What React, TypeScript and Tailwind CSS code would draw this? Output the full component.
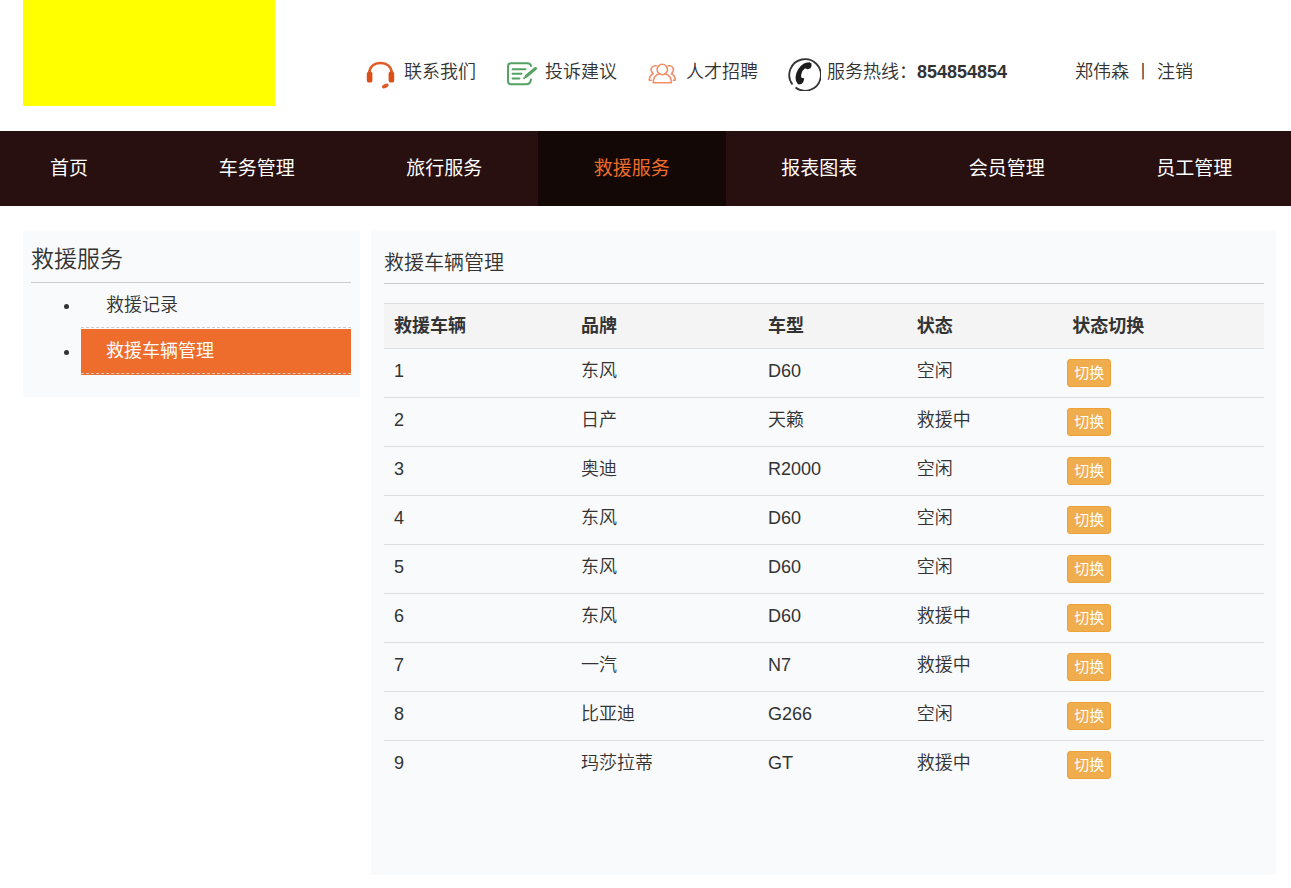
import { useState } from "react";
import type { ReactNode } from "react";

const HeadsetIcon = () => (
  <svg viewBox="0 0 32 32" className="h-8 w-8 shrink-0" aria-hidden="true">
    <path d="M5.300 15C5.300 8.800 10.200 5 16.500 5S27.700 8.800 27.700 15" fill="none" stroke="#e25a26" strokeWidth="2.500" />
    <rect x="2.800" y="13.500" width="5.600" height="11" rx="2.600" fill="#dd4f18" />
    <rect x="24.600" y="13.500" width="5.600" height="11" rx="2.600" fill="#dd4f18" />
    <ellipse cx="21.300" cy="28" rx="3.500" ry="1.900" transform="rotate(-24 21.300 28)" fill="#e05a25" />
  </svg>
);

const FeedbackIcon = () => (
  <svg viewBox="0 0 32 32" className="h-8 w-8 shrink-0" aria-hidden="true" fill="none" stroke="#55a364" strokeLinecap="round">
    <path d="M26 8q-.5-2.800-3.500-2.800H6Q3 5.200 3 8.500v14.500Q3 26.200 6 26.200h15.500q3.800 0 4.500-4.700" strokeWidth="2" />
    <path d="M7.500 11.200h13M7.500 15.800h9M7.500 20.500h7" strokeWidth="1.900" />
    <path d="M30.500 10.500L21.500 18" strokeWidth="3" />
    <path d="M21.500 18l-2.500 2.200" strokeWidth="1.800" />
  </svg>
);

const PeopleIcon = () => (
  <svg viewBox="0 0 32 32" className="h-8 w-8 shrink-0" aria-hidden="true" fill="none" stroke="#f08f68" strokeWidth="1.600" strokeLinejoin="round" strokeLinecap="round">
    <circle cx="16.300" cy="11.500" r="5.200" />
    <path d="M13 16c-3.800 1.200-5.800 4-5.800 8.800h18.200c0-4.800-2-7.600-5.800-8.800" />
    <path d="M10.200 7.800c-3.400-.5-5.600 2-4.900 5 .3 1.400 1 2.300 1.900 2.900-2.400 1-3.900 3.300-3.900 6.500h2" />
    <path d="M22.400 7.800c3.400-.5 5.600 2 4.900 5-.3 1.400-1 2.300-1.900 2.900 2.400 1 3.900 3.300 3.900 6.500h-2" />
  </svg>
);

const PhoneIcon = () => (
  <svg viewBox="0 0 34 34" className="h-[34px] w-[34px] shrink-0" aria-hidden="true">
    <path d="M5.500 27.500A15.800 15.800 0 1 1 8.500 30.500" fill="none" stroke="#333333" strokeWidth="1.800" />
    <path d="M16.500 6.800Q18.500 5.500 22.500 5.300L24.500 6.500Q25 9 23.500 11.200L20.500 12.300Q19 11.300 17.800 11.600Q15.500 13 14.300 17.200Q13.700 20 14.700 20.800L17.300 21.500Q17 24.800 14.500 27L11.500 27.500Q8.300 25 8.600 20Q9.500 11.500 16.500 6.800z" fill="#1c1c1c" />
  </svg>
);

const contactLinks: { label: string; icon: ReactNode }[] = [
  { label: "联系我们", icon: <HeadsetIcon /> },
  { label: "投诉建议", icon: <FeedbackIcon /> },
  { label: "人才招聘", icon: <PeopleIcon /> },
];

const navItems = ["首页", "车务管理", "旅行服务", "救援服务", "报表图表", "会员管理", "员工管理"];
const activeNav = "救援服务";

const sideItems = ["救援记录", "救援车辆管理"];
const activeSide = "救援车辆管理";

type Status = "空闲" | "救援中";
type Vehicle = { id: number; brand: string; model: string; status: Status };

const initialVehicles: Vehicle[] = [
  { id: 1, brand: "东风", model: "D60", status: "空闲" },
  { id: 2, brand: "日产", model: "天籁", status: "救援中" },
  { id: 3, brand: "奥迪", model: "R2000", status: "空闲" },
  { id: 4, brand: "东风", model: "D60", status: "空闲" },
  { id: 5, brand: "东风", model: "D60", status: "空闲" },
  { id: 6, brand: "东风", model: "D60", status: "救援中" },
  { id: 7, brand: "一汽", model: "N7", status: "救援中" },
  { id: 8, brand: "比亚迪", model: "G266", status: "空闲" },
  { id: 9, brand: "玛莎拉蒂", model: "GT", status: "救援中" },
];

function Header() {
  return (
    <header className="flex h-[131px] items-start pl-[23px]">
      <div className="h-[106px] w-[252px] shrink-0 bg-[#ffff00]" />
      <div className="ml-[89px] mt-[57px] flex h-[34px] items-center gap-[29px] whitespace-nowrap">
        {contactLinks.map((link) => (
          <a key={link.label} href="#" className="flex items-center gap-2">
            {link.icon}
            <span className="pb-1">{link.label}</span>
          </a>
        ))}
        <div className="flex items-center gap-[6px]">
          <PhoneIcon />
          <span className="pb-1">
            服务热线：<strong className="font-bold">854854854</strong>
          </span>
        </div>
      </div>
      <div className="ml-[68px] mt-[57px] flex h-[34px] items-center gap-[5px] whitespace-nowrap pb-1">
        <a href="#">郑伟森</a>
        <span>丨</span>
        <a href="#">注销</a>
      </div>
    </header>
  );
}

function MainNav() {
  return (
    <nav className="grid h-[75px] grid-cols-[163px_repeat(6,minmax(0,1fr))] bg-[#281010] pr-[3px] text-[19px] font-normal text-white">
      {navItems.map((item, i) => (
        <a
          key={item}
          href="#"
          className={`flex items-center justify-center ${i === 0 ? "pr-[25px]" : ""} ${
            item === activeNav ? "bg-[#130805] text-[#ee6c2c]" : ""
          }`}
        >
          {item}
        </a>
      ))}
    </nav>
  );
}

function Sidebar() {
  return (
    <aside className="w-[337px] shrink-0 bg-[#f9fafc] pb-[22px] pl-2 pr-[9px]">
      <h2 className="h-[52px] border-b border-[#cccccc] pt-3 text-[23px] leading-8">救援服务</h2>
      <ul className="list-disc pl-[50px]">
        {sideItems.map((item) => (
          <li key={item} className={item === activeSide ? "bg-[#ee6c2c] pb-px" : "pb-px"}>
            <a
              href="#"
              className={`block border-b border-dashed border-[#cccccc] pl-[25px] leading-[44px] ${
                item === activeSide ? "font-normal text-white" : ""
              }`}
            >
              {item}
            </a>
          </li>
        ))}
      </ul>
    </aside>
  );
}

function VehiclePanel() {
  const [vehicles, setVehicles] = useState(initialVehicles);

  const toggle = (id: number) =>
    setVehicles((list) =>
      list.map((v) => (v.id === id ? { ...v, status: v.status === "空闲" ? "救援中" : "空闲" } : v)),
    );

  return (
    <main className="min-w-0 flex-1 bg-[#f9fafc] pb-[85px] pl-[13px] pr-3">
      <h3 className="mb-[19px] h-[53px] border-b border-[#cccccc] pt-4 text-[20px] leading-8">救援车辆管理</h3>
      <table className="w-full table-fixed border-collapse text-left">
        <colgroup>
          <col className="w-[21.25%]" />
          <col className="w-[21.25%]" />
          <col className="w-[16.9%]" />
          <col className="w-[17.1%]" />
          <col />
        </colgroup>
        <thead>
          <tr className="h-[45px] border-y border-[#dddddd] bg-[#f4f4f4]">
            <th className="px-[10px]">救援车辆</th>
            <th className="px-[10px]">品牌</th>
            <th className="px-[10px]">车型</th>
            <th className="px-[10px]">状态</th>
            <th className="px-[15px]">状态切换</th>
          </tr>
        </thead>
        <tbody>
          {vehicles.map((v) => (
            <tr key={v.id} className="h-[49px] border-b border-[#dddddd] last:border-b-0">
              <td className="px-[10px] pb-1">{v.id}</td>
              <td className="px-[10px] pb-1">{v.brand}</td>
              <td className="px-[10px] pb-1">{v.model}</td>
              <td className="px-[10px] pb-1">{v.status}</td>
              <td className="px-[10px]">
                <button
                  type="button"
                  onClick={() => toggle(v.id)}
                  className="block h-7 cursor-pointer rounded-[3px] border border-[#eea236] bg-[#f0ad4e] px-[6px] pb-[2px] text-[15px] font-normal leading-none text-white"
                >
                  切换
                </button>
              </td>
            </tr>
          ))}
        </tbody>
      </table>
    </main>
  );
}

export default function App() {
  return (
    <div className="min-h-screen bg-white font-['Liberation_Sans','Noto_Sans_CJK_SC',sans-serif] text-[18px] font-[350] leading-[26px] text-[#333333]">
      <Header />
      <MainNav />
      <div className="flex items-start gap-[11px] pb-[13px] pl-[23px] pr-[15px] pt-[25px]">
        <Sidebar />
        <VehiclePanel />
      </div>
    </div>
  );
}
